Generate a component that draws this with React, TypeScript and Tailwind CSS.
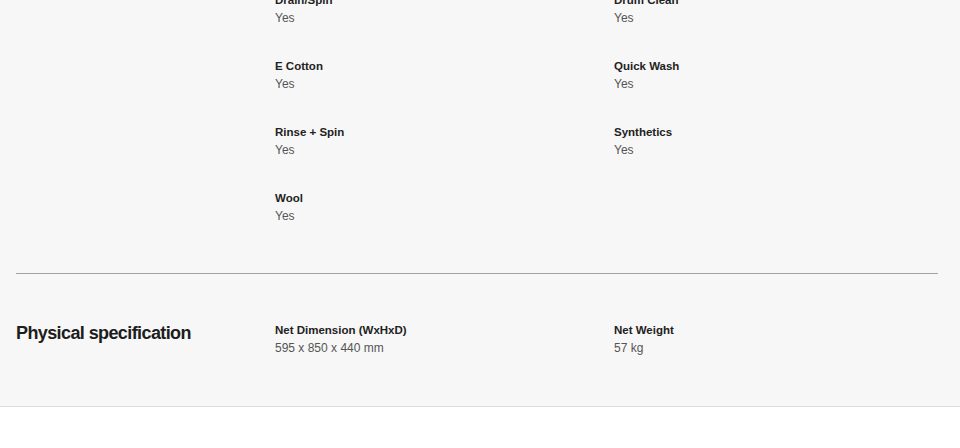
import React from 'react';

type Spec = { label: string; value: string };

const programmes: Spec[] = [
  { label: 'Drain/Spin', value: 'Yes' },
  { label: 'Drum Clean', value: 'Yes' },
  { label: 'E Cotton', value: 'Yes' },
  { label: 'Quick Wash', value: 'Yes' },
  { label: 'Rinse + Spin', value: 'Yes' },
  { label: 'Synthetics', value: 'Yes' },
  { label: 'Wool', value: 'Yes' },
];

const physical: Spec[] = [
  { label: 'Net Dimension (WxHxD)', value: '595 x 850 x 440 mm' },
  { label: 'Net Weight', value: '57 kg' },
];

function SpecItem({ spec }: { spec: Spec }) {
  return (
    <div className="leading-[18px]">
      <p className="text-[11.5px] font-bold text-[#222222]">{spec.label}</p>
      <p className="text-[12px] text-[#555555]">{spec.value}</p>
    </div>
  );
}

export default function App() {
  return (
    <div className="w-[960px] h-[448px] overflow-hidden bg-white font-['Liberation_Sans',Arial,sans-serif]">
      <div className="bg-[#f7f7f7] border-b border-[#dddddd] pl-4 pr-[22px] h-[407px] overflow-hidden">
        {/* Programmes (continued) */}
        <div className="flex -mt-[9px] pb-[48px]">
          <div className="w-[259px] shrink-0" />
          <div className="grid grid-cols-[339px_1fr] gap-y-[30px] flex-1">
            {programmes.map((spec) => (
              <SpecItem key={spec.label} spec={spec} />
            ))}
          </div>
        </div>

        <div className="border-t border-[#a3a3a3]" />

        {/* Physical specification */}
        <div className="flex pt-[47px]">
          <h3 className="w-[259px] shrink-0 text-[18px] leading-[24px] font-bold tracking-[-0.6px] text-[#1d1d1d]">
            Physical specification
          </h3>
          <div className="grid grid-cols-[339px_1fr] gap-y-[30px] flex-1">
            {physical.map((spec) => (
              <SpecItem key={spec.label} spec={spec} />
            ))}
          </div>
        </div>
      </div>
    </div>
  );
}
